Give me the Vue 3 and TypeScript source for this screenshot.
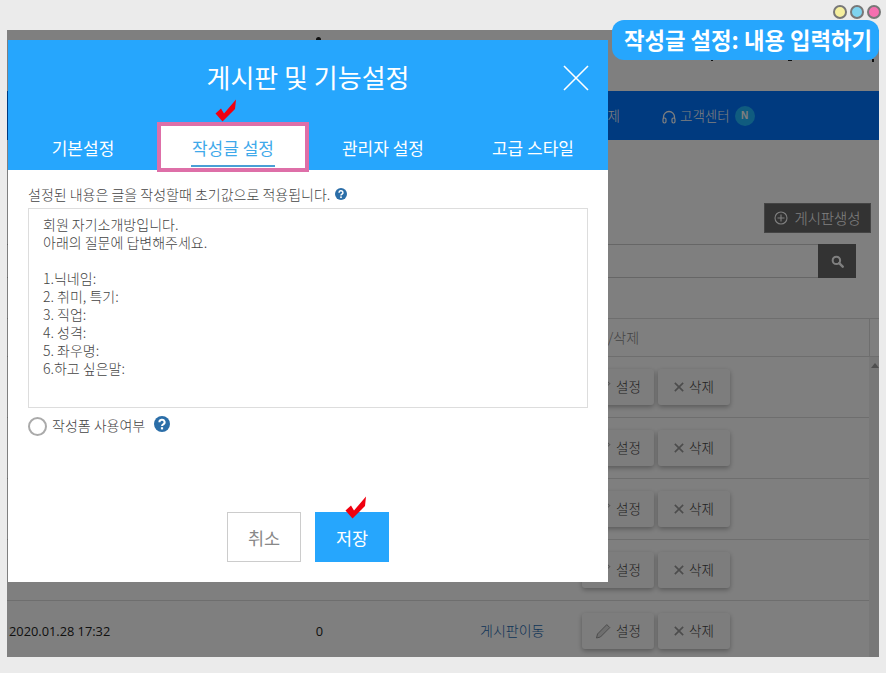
<template>
  <div class="stage">
    <header class="top-bar"><i class="speck s1"></i><i class="speck s2"></i><i class="speck s3"></i><i class="speck s4"></i></header>
    <nav class="main-nav">
      <span class="nav-item cut">삭제</span>
      <span class="nav-item support">
        <svg class="headset" viewBox="0 0 14 14" width="14" height="14">
          <path d="M1.5 9V7a5.5 5.5 0 0 1 11 0v2" fill="none" stroke="currentColor" stroke-width="1.3" />
          <rect x="1" y="8" width="3" height="5" rx="1.4" fill="none" stroke="currentColor" stroke-width="1.2" />
          <rect x="10" y="8" width="3" height="5" rx="1.4" fill="none" stroke="currentColor" stroke-width="1.2" />
        </svg>
        고객센터<b class="badge">N</b>
      </span>
    </nav>

    <div class="tools">
      <button class="create-btn">
        <svg viewBox="0 0 14 14" width="14" height="14">
          <circle cx="7" cy="7" r="6" fill="none" stroke="currentColor" stroke-width="1.1" />
          <path d="M7 3.5v7M3.5 7h7" stroke="currentColor" stroke-width="1.1" />
        </svg>
        게시판생성
      </button>
    </div>
    <div class="search">
      <div class="search-input"></div>
      <button class="search-btn">
        <svg viewBox="0 0 14 14" width="13" height="13">
          <circle cx="5.8" cy="5.8" r="4" fill="none" stroke="currentColor" stroke-width="2.2" />
          <path d="M8.8 8.8l3.8 3.8" stroke="currentColor" stroke-width="2.6" stroke-linecap="round" />
        </svg>
      </button>
    </div>

    <div class="table-head">
      <span class="head-label">설정/삭제</span>
      <span class="head-end"></span>
    </div>
    <div class="table-body">
      <div class="rows">
        <div v-for="row in rows" :key="row.id" class="row">
          <span class="date">{{ row.date }}</span>
          <span class="count">{{ row.count }}</span>
          <a class="move">게시판이동</a>
          <span class="actions">
            <button class="row-btn">
              <svg viewBox="0 0 16 16" width="16" height="16">
                <path d="M1.5 15l1-4L11.8 1.6l3 3L5.4 14z" fill="#ddd" stroke="currentColor" stroke-width="1" />
              </svg>
              설정
            </button>
            <button class="row-btn">
              <svg viewBox="0 0 12 12" width="10" height="10">
                <path d="M1 1l10 10M11 1L1 11" stroke="currentColor" stroke-width="2" />
              </svg>
              삭제
            </button>
          </span>
        </div>
      </div>
      <div class="scrollbar"><i class="scroll-arrow"></i></div>
    </div>

    <div class="dim"></div>
  </div>

  <section class="modal">
    <div class="modal-head">
      <h1 class="modal-title">게시판 및 기능설정</h1>
      <svg class="close" viewBox="0 0 26 26" width="26" height="26">
        <path d="M1 1l24 24M25 1L1 25" stroke="#fff" stroke-width="1.6" />
      </svg>
      <div class="tabs">
        <span v-for="tab in tabs" :key="tab" class="tab" :class="{ active: tab === activeTab }">
          <em>{{ tab }}</em>
        </span>
      </div>
    </div>
    <div class="modal-body">
      <p class="hint">
        설정된 내용은 글을 작성할때 초기값으로 적용됩니다.
        <svg class="help small" viewBox="0 0 16 16" width="12" height="12">
          <circle cx="8" cy="8" r="8" fill="#2b6ea8" />
          <path d="M5.4 6.2a2.6 2.4 0 1 1 3.8 2.1c-.8.5-1.2.8-1.2 1.7" fill="none" stroke="#fff" stroke-width="2" />
          <rect x="6.9" y="11.2" width="2.2" height="2.2" fill="#fff" />
        </svg>
      </p>
      <textarea class="template" readonly :value="template"></textarea>
      <div class="use-row">
        <i class="radio"></i>
        <span class="use-label">작성폼 사용여부</span>
        <svg class="help" viewBox="0 0 16 16" width="16" height="16">
          <circle cx="8" cy="8" r="8" fill="#2b6ea8" />
          <path d="M5.4 6.2a2.6 2.4 0 1 1 3.8 2.1c-.8.5-1.2.8-1.2 1.7" fill="none" stroke="#fff" stroke-width="2" />
          <rect x="6.9" y="11.2" width="2.2" height="2.2" fill="#fff" />
        </svg>
      </div>
      <div class="buttons">
        <button class="cancel">취소</button>
        <button class="save">저장</button>
      </div>
    </div>
  </section>

  <svg v-for="c in checks" :key="c" class="check" :class="c" viewBox="0 0 22 24" width="22" height="24">
    <path d="M0.5 14.5L6 9.5l3 5L21 0.5 20 10 7.5 22.5z" fill="#f00010" />
  </svg>

  <div class="dots"><i class="dot yellow"></i><i class="dot blue"></i><i class="dot pink"></i></div>
  <div class="caption">작성글 설정: 내용 입력하기</div>
</template>

<script setup lang="ts">
const tabs = ['기본설정', '작성글 설정', '관리자 설정', '고급 스타일'];
const activeTab = '작성글 설정';
const checks = ['check-tab', 'check-save'];

const template = `회원 자기소개방입니다.
아래의 질문에 답변해주세요.

1.닉네임:
2. 취미, 특기:
3. 직업:
4. 성격:
5. 좌우명:
6.하고 싶은말:`;

const rows = [1, 2, 3, 4, 5].map((id) => ({ id, date: '2020.01.28 17:32', count: 0 }));
</script>

<style>
html, body { height: 100%; margin: 0; overflow: hidden; background: #ebebeb; }
</style>

<style scoped>
* { box-sizing: border-box; }
button { font-family: inherit; }

.stage {
  position: relative;
  margin: 30px 0 0 7px;
  width: 872px; height: 627px;
  background: #fff;
  overflow: hidden;
  font-family: "Noto Sans CJK KR", "Liberation Sans", sans-serif;
  font-weight: 300;
}
.dim { position: absolute; inset: 0; background: rgba(0,0,0,0.5); }

.top-bar { height: 61px; position: relative; }
.speck { position: absolute; background: #222; }
.s1 { left: 309px; top: 7px; width: 5px; height: 3px; border-radius: 3px 3px 0 0; }
.s2 { left: 704px; top: 29px; width: 2px; height: 2px; }
.s3 { left: 781px; top: 29px; width: 4px; height: 2px; }
.s4 { left: 865px; top: 29px; width: 2px; height: 3px; }

.main-nav {
  height: 49px;
  background: #0074ff;
  display: flex; align-items: center;
  padding: 0 0 2px 588px;
  color: #fff; font-size: 13.5px;
}
.nav-item { display: flex; align-items: center; }
.cut { width: 67px; }
.support { gap: 4px; }
.headset { margin-top: 4px; }
.badge {
  width: 20px; height: 20px; border-radius: 50%;
  background: #20b8ff; margin: 2px 0 0 1px;
  display: flex; align-items: center; justify-content: center;
  font: bold 10px "Liberation Sans", sans-serif;
}

.tools { display: flex; justify-content: flex-end; padding: 63px 8px 0 0; }
.create-btn {
  width: 107px; height: 30px;
  background: #666; color: #fff;
  border: 1px solid #888; font-size: 14.4px; font-weight: 300;
  display: flex; align-items: center; justify-content: center; gap: 6px;
  padding: 0 0 2px;
}
.create-btn svg { margin-top: 2px; }
.search { display: flex; justify-content: flex-end; padding: 11px 23px 0 0; }
.search-input { flex: 1; height: 34px; border-top: 1px solid #ccc; border-bottom: 1px solid #ccc; }
.search-btn {
  width: 38px; height: 34px; border: 0; padding: 0;
  background: #666; color: #fff;
  display: flex; align-items: center; justify-content: center;
}

.table-head {
  margin-top: 40px; height: 39px;
  border-top: 1px solid #ddd; border-bottom: 1px solid #ddd;
  display: flex; align-items: center;
  padding-left: 575px;
  font-size: 14px; color: #888;
}
.head-label { width: 287px; margin-top: -2px; }
.head-end { flex: 1; height: 100%; border-left: 1px solid #ddd; }

.table-body { display: flex; }
.rows { width: 862px; }
.scrollbar { flex: 1; background: #f0f0f0; position: relative; }
.scroll-arrow {
  position: absolute; top: 6px; left: 2px;
  border: 4px solid transparent; border-top: 0; border-bottom: 5px solid #a0a0a0;
}
.row {
  height: 61px;
  border-bottom: 1px solid #ddd;
  display: grid;
  grid-template-columns: 240px 145px 190px 1fr;
  align-items: center;
  font-size: 14px; color: #222;
}
.date { padding-left: 2px; font: 12.8px "Open Sans", "Liberation Sans", sans-serif; }
.count { text-align: center; font: 12.8px "Open Sans", "Liberation Sans", sans-serif; }
.move { padding-left: 88px; margin-top: -2px; color: #1e6ab0; white-space: nowrap; }
.actions { display: flex; gap: 4px; margin-top: -1px; }
.row-btn {
  width: 72px; height: 36px;
  background: #fbfbfb; border: 0; border-radius: 3px;
  box-shadow: 0 2px 5px rgba(0,0,0,0.3);
  color: #444; font-size: 13.5px; font-weight: 300; padding: 0 0 2px;
  display: flex; align-items: center; justify-content: center; gap: 5px;
}
.row-btn svg { color: #999; margin-top: 2px; }

.modal {
  position: absolute; left: 8px; top: 40px;
  width: 600px; height: 542px;
  background: #fff;
  font-family: "Noto Sans CJK KR", "Liberation Sans", sans-serif;
}
.modal-head { height: 130px; background: #26a6fd; position: relative; }
.modal-title {
  margin: 0; padding-top: 19px;
  text-align: center;
  font-size: 26px; font-weight: 400; line-height: 36px;
  color: #fff;
}
.close { position: absolute; left: 555px; top: 25px; }
.tabs { position: absolute; left: 0; right: 0; bottom: 0; display: flex; }
.tab {
  width: 150px; height: 48px;
  display: flex; justify-content: center;
  padding-top: 14px;
  font-size: 17px; line-height: 24px; color: #fff;
}
.tab em { font-style: normal; }
.tab.active {
  background: #fff; color: #3fa9ea;
  height: 50px; margin: 0 -1px -2px; width: 152px;
  border: 4px solid #de6fa8;
  padding-top: 10px;
}
.tab.active em { height: 31px; border-bottom: 2px solid #4a9fd6; padding: 0 1px; }

.modal-body { padding: 0 20px; }
.hint {
  margin: 0; padding: 12px 0 3px; height: 38px;
  font-size: 14px; font-weight: 300; line-height: 20px; color: #444;
  display: flex; align-items: center; gap: 5px;
}
.template {
  display: block; width: 560px; height: 200px;
  border: 1px solid #ddd; resize: none; outline: none;
  padding: 6px 14px;
  font: 300 14px/18px "Noto Sans CJK KR", "Liberation Sans", sans-serif;
  color: #444;
}
.use-row {
  display: flex; align-items: center;
  margin-top: 9px; height: 19px;
  font-size: 14px; font-weight: 300; color: #444;
}
.radio {
  width: 19px; height: 19px; border-radius: 50%;
  border: 2px solid #aaa; margin-right: 5px;
}
.use-label { margin-top: -3px; }
.use-row .help { margin: -5px 0 0 9px; }
.buttons { display: flex; justify-content: center; gap: 14px; margin-top: 76px; }
.buttons button { width: 74px; height: 50px; font-size: 17.5px; padding: 0; }
.cancel { background: #fff; border: 1px solid #ccc; color: #888; }
.save { background: #26a6fd; border: 0; color: #fff; }

.check { position: absolute; }
.check-tab { left: 215px; top: 99px; }
.check-save { left: 345px; top: 496px; }

.dots { position: absolute; left: 833px; top: 5px; display: flex; gap: 3px; }
.dot { width: 14px; height: 14px; border-radius: 50%; border: 2px solid #777; }
.yellow { background: #f5ef9e; }
.blue { background: #7fd3ee; }
.pink { background: #f56fb0; }
.caption {
  position: absolute; left: 612px; top: 20px;
  width: 267px; height: 40px; border-radius: 12px;
  padding-left: 5px;
  background: #26a6fd; color: #fff;
  font: 700 22.3px/38px "Noto Sans CJK KR", "Liberation Sans", sans-serif;
  text-align: center; white-space: nowrap;
}
</style>
